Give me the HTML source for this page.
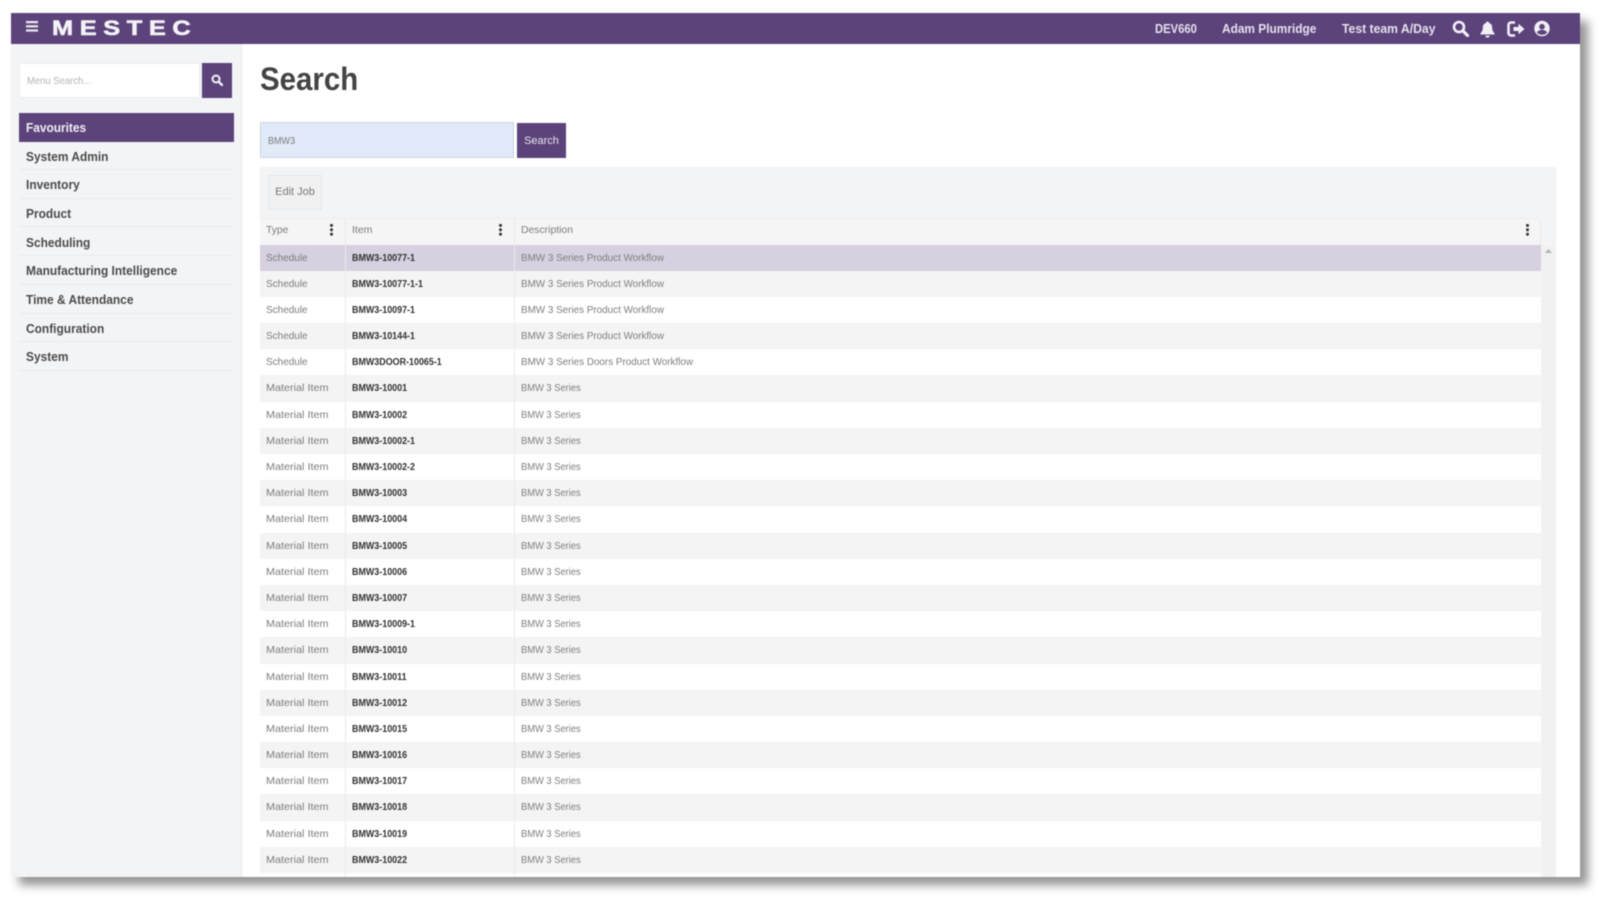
<!DOCTYPE html>
<html><head><meta charset="utf-8"><title>Search</title>
<style>
*{box-sizing:border-box}
html,body{margin:0;width:1600px;height:908px;overflow:hidden;background:#fff;font-family:"Liberation Sans",sans-serif}
.wrap{position:absolute;left:0;top:0;width:1600px;height:908px;filter:blur(.45px)}
.shadow{position:absolute;left:11px;top:13px;width:1569px;height:864px;box-shadow:8px 8px 9px rgba(0,0,0,.42)}
.panel{position:absolute;left:11px;top:13px;width:1569px;height:864px;background:#fff;overflow:hidden}
.a{position:absolute;white-space:nowrap;transform-origin:0 50%}
.nav{position:absolute;left:0;top:0;width:1569px;height:31px;background:#5c437c}
.side{position:absolute;left:0;top:31px;width:231px;height:833px;background:#f3f4f6;border-right:1px solid #e9eaec}
.mi{position:absolute;left:8px;width:215px;height:28.67px;line-height:31px;padding-left:7px;font-size:12.5px;font-weight:bold;color:#4b4b4b;border-bottom:1px solid #e8e9eb}
.mi span{display:inline-block;transform:scaleX(.955);transform-origin:0 50%}
.rows{position:absolute;left:249px;top:231.5px;width:1281px}
.r{height:26.19px;line-height:26.5px;font-size:10.5px;position:relative;background:#fff}
.r:nth-child(even){background:#f4f4f4}
.r.sel{background:#d7d0e0}
.r b,.r i,.r u{position:absolute;font-style:normal;text-decoration:none;white-space:nowrap;transform-origin:0 50%;top:0}
.r i{left:6px;color:#7c7c7c;transform:scaleX(.95)}
.r b{left:92px;color:#333;font-weight:bold;transform:scaleX(.85)}
.r u{left:261px;color:#7e7e7e;transform:scaleX(.94)}
.r:nth-child(n+6) i{transform:scaleX(1.03)}
.r:nth-child(n+6) u{transform:scaleX(.89)}
.r:before,.r:after{content:"";position:absolute;top:0;bottom:0;width:1px;background:#ebebeb}
.r:before{left:85px}.r:after{left:253.5px}
.dots{position:absolute;width:3px;height:12px;top:5px;background:radial-gradient(circle at 50% 1.4px,#333 1.4px,transparent 1.6px) 0 0/3px 4.4px repeat-y}
</style></head><body>
<div class="wrap">
<div class="shadow"></div>
<div class="panel">
  <div class="nav">
    <svg class="a" style="left:15px;top:8px" width="12" height="11"><rect y="0" width="12" height="2.2" fill="#ece8f1"/><rect y="4.2" width="12" height="2.2" fill="#ece8f1"/><rect y="8.4" width="12" height="2.2" fill="#ece8f1"/></svg>
    <div class="a" style="left:41px;top:3.500px;line-height:23px;font-size:21.5px;font-weight:bold;color:#f4f2f6;letter-spacing:5.6px;transform:scaleX(1.18);-webkit-text-stroke:.6px #f4f2f6">MESTEC</div>
    <div class="a" style="left:1144px;top:7.5px;line-height:16px;font-size:12.5px;font-weight:bold;color:#e6e1ec;transform:scaleX(.9)">DEV660</div>
    <div class="a" style="left:1211px;top:7.5px;line-height:16px;font-size:12.5px;font-weight:bold;color:#e6e1ec;transform:scaleX(.95)">Adam Plumridge</div>
    <div class="a" style="left:1331px;top:7.5px;line-height:16px;font-size:12.5px;font-weight:bold;color:#e6e1ec;transform:scaleX(.975)">Test team A/Day</div>
    <svg class="a" style="left:1441px;top:7px" width="17" height="17" viewBox="0 0 17 17" fill="none" stroke="#f2eff5"><circle cx="7" cy="7" r="5" stroke-width="2.6"/><path d="M10.8 10.8L15.5 15.5" stroke-width="3.2" stroke-linecap="round"/></svg>
    <svg class="a" style="left:1469px;top:8px" width="15" height="17" viewBox="0 0 15 17" fill="#f2eff5"><path d="M7.5 0.5c1 0 1.4.6 1.5 1.5 2.2.6 3.2 2.3 3.2 4.6 0 3 1 4.3 2.3 5.6v1.3H.5v-1.3C1.8 10.900 2.800 9.600 2.800 6.600 2.800 4.300 3.800 2.600 6 2c.1-.9.500-1.500 1.500-1.500z"/><path d="M5.300 14.600h4.400c0 1.200-1 2-2.200 2s-2.200-.8-2.200-2z"/></svg>
    <svg class="a" style="left:1496px;top:8px" width="18" height="16" viewBox="0 0 18 16" fill="none"><path d="M8 1.500H4a2.500 2.500 0 0 0-2.500 2.500v8A2.500 2.500 0 0 0 4 14.500h4" stroke="#f2eff5" stroke-width="2.600"/><path d="M6.500 6h5V2.800L17.500 8l-6 5.200V10h-5z" fill="#f2eff5"/></svg>
    <svg class="a" style="left:1523px;top:7px" width="16" height="17" viewBox="0 0 16 17"><circle cx="8" cy="8.500" r="7.700" fill="#f2eff5"/><circle cx="8" cy="6.700" r="2.800" fill="#5c437c"/><path d="M2.900 12.600c1-1.900 2.900-2.700 5.100-2.700s4.100.8 5.100 2.700c-1.300 1.400-3.100 2.200-5.100 2.200s-3.800-.8-5.100-2.200z" fill="#5c437c"/></svg>
  </div>
  <div class="side">
    <div class="a" style="left:8px;top:18.500px;width:181px;height:35px;background:#fff;border:1px solid #eceef0"></div>
    <div class="a" style="left:16px;top:30px;font-size:10.500px;line-height:14px;color:#b4b4b4;transform:scaleX(.9)">Menu Search...</div>
    <div class="a" style="left:191px;top:19px;width:30px;height:35px;background:#5c437c"></div>
    <svg class="a" style="left:200px;top:30px" width="12" height="12" viewBox="0 0 12 12" fill="none" stroke="#f2eff5"><circle cx="5" cy="5" r="3.500" stroke-width="2"/><path d="M7.800 7.800L11 11" stroke-width="2.400" stroke-linecap="round"/></svg>
    <div class="a" style="left:8px;top:68.500px;width:215px;height:29px;background:#5c437c;color:#f1eef4;font-size:12.500px;font-weight:bold;line-height:30.500px;padding-left:7px"><span style="display:inline-block;transform:scaleX(.95);transform-origin:0 50%">Favourites</span></div>
    <div class="mi" style="top:97.500px"><span>System Admin</span></div>
    <div class="mi" style="top:126.170px"><span>Inventory</span></div>
    <div class="mi" style="top:154.840px"><span>Product</span></div>
    <div class="mi" style="top:183.510px"><span>Scheduling</span></div>
    <div class="mi" style="top:212.180px"><span>Manufacturing Intelligence</span></div>
    <div class="mi" style="top:240.850px"><span>Time &amp; Attendance</span></div>
    <div class="mi" style="top:269.520px"><span>Configuration</span></div>
    <div class="mi" style="top:298.190px"><span>System</span></div>
  </div>
  <div class="a" style="left:249px;top:46px;font-size:32px;line-height:40px;font-weight:bold;color:#444;transform:scaleX(.92)">Search</div>
  <div class="a" style="left:249px;top:109px;width:253.500px;height:36px;background:#e1eaf8;border:1px solid #c9d3e2"></div>
  <div class="a" style="left:256.500px;top:121px;font-size:10.500px;line-height:14px;color:#7c7c7c;transform:scaleX(.86)">BMW3</div>
  <div class="a" style="left:506px;top:110px;width:49px;height:35px;background:#5c437c;color:#e9e5ee;font-size:11px;line-height:36.500px;text-align:center">Search</div>
  <div class="a" style="left:249px;top:154px;width:1296px;height:710px;background:#f3f4f6;border:1px solid #eff0f2"></div>
  <div class="a" style="left:257px;top:162px;width:54px;height:35px;background:#f1f1f2;border:1px solid #e6e7e9;color:#777;font-size:11px;line-height:33.500px;text-align:center">Edit Job</div>
  <div class="a" style="left:249px;top:204.500px;width:1281px;height:27px;background:#f5f5f6;border-top:1px solid #eceef0;font-size:10.500px;line-height:23.500px;color:#7c7c7c">
    <span class="a" style="left:6px;top:0;transform:scaleX(.98)">Type</span><span class="dots" style="left:69.500px;top:5px"></span>
    <span class="a" style="left:92px;top:0;transform:scaleX(1)">Item</span><span class="dots" style="left:239px;top:5px"></span>
    <span class="a" style="left:261px;top:0;transform:scaleX(.99)">Description</span><span class="dots" style="left:1266px;top:5px"></span>
    <span class="a" style="left:85px;top:0;width:1px;height:27px;background:#e9e9ea"></span>
    <span class="a" style="left:253.500px;top:0;width:1px;height:27px;background:#e9e9ea"></span>
    <span class="a" style="left:1280px;top:0;width:1px;height:27px;background:#e9e9ea"></span>
  </div>
  <div class="a" style="left:1530px;top:231.500px;width:15px;height:632.500px;background:#f1f1f1"></div>
  <svg class="a" style="left:1534px;top:236px" width="7" height="4"><path d="M0 4L3.500 0L7 4z" fill="#b4b4b4"/></svg>
  <div class="rows">
    <div class="r sel"><i>Schedule</i><b>BMW3-10077-1</b><u>BMW 3 Series Product Workflow</u></div>
    <div class="r"><i>Schedule</i><b>BMW3-10077-1-1</b><u>BMW 3 Series Product Workflow</u></div>
    <div class="r"><i>Schedule</i><b>BMW3-10097-1</b><u>BMW 3 Series Product Workflow</u></div>
    <div class="r"><i>Schedule</i><b>BMW3-10144-1</b><u>BMW 3 Series Product Workflow</u></div>
    <div class="r"><i>Schedule</i><b>BMW3DOOR-10065-1</b><u>BMW 3 Series Doors Product Workflow</u></div>
    <div class="r"><i>Material Item</i><b>BMW3-10001</b><u>BMW 3 Series</u></div>
    <div class="r"><i>Material Item</i><b>BMW3-10002</b><u>BMW 3 Series</u></div>
    <div class="r"><i>Material Item</i><b>BMW3-10002-1</b><u>BMW 3 Series</u></div>
    <div class="r"><i>Material Item</i><b>BMW3-10002-2</b><u>BMW 3 Series</u></div>
    <div class="r"><i>Material Item</i><b>BMW3-10003</b><u>BMW 3 Series</u></div>
    <div class="r"><i>Material Item</i><b>BMW3-10004</b><u>BMW 3 Series</u></div>
    <div class="r"><i>Material Item</i><b>BMW3-10005</b><u>BMW 3 Series</u></div>
    <div class="r"><i>Material Item</i><b>BMW3-10006</b><u>BMW 3 Series</u></div>
    <div class="r"><i>Material Item</i><b>BMW3-10007</b><u>BMW 3 Series</u></div>
    <div class="r"><i>Material Item</i><b>BMW3-10009-1</b><u>BMW 3 Series</u></div>
    <div class="r"><i>Material Item</i><b>BMW3-10010</b><u>BMW 3 Series</u></div>
    <div class="r"><i>Material Item</i><b>BMW3-10011</b><u>BMW 3 Series</u></div>
    <div class="r"><i>Material Item</i><b>BMW3-10012</b><u>BMW 3 Series</u></div>
    <div class="r"><i>Material Item</i><b>BMW3-10015</b><u>BMW 3 Series</u></div>
    <div class="r"><i>Material Item</i><b>BMW3-10016</b><u>BMW 3 Series</u></div>
    <div class="r"><i>Material Item</i><b>BMW3-10017</b><u>BMW 3 Series</u></div>
    <div class="r"><i>Material Item</i><b>BMW3-10018</b><u>BMW 3 Series</u></div>
    <div class="r"><i>Material Item</i><b>BMW3-10019</b><u>BMW 3 Series</u></div>
    <div class="r"><i>Material Item</i><b>BMW3-10022</b><u>BMW 3 Series</u></div>
    <div class="r"></div>
  </div>
</div>
</div>
</body></html>
